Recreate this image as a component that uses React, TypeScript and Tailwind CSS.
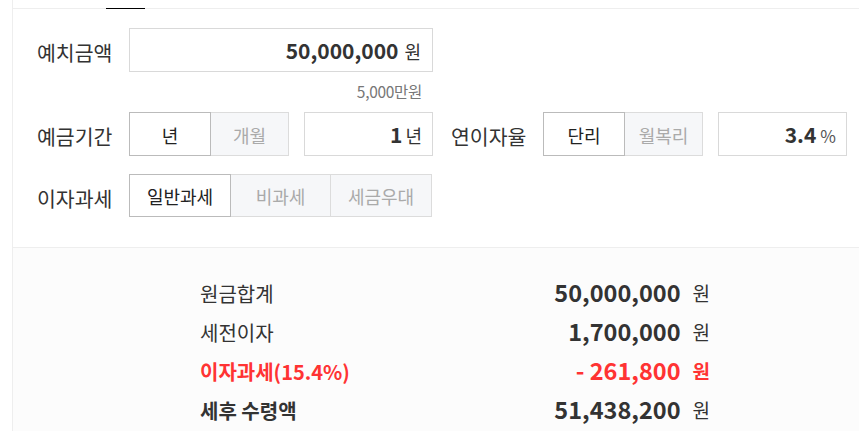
import React from 'react';

const font = { fontFamily: '"Noto Sans CJK KR", "Noto Sans", sans-serif' };

function Seg({
  items,
  widths,
  selected,
}: {
  items: string[];
  widths: string[];
  selected: number;
}) {
  return (
    <div className="flex">
      {items.map((label, i) => {
        const on = i === selected;
        return (
          <div
            key={label}
            className={`${widths[i]} h-full flex items-center justify-center pt-[2px] text-[18px] border ${
              i > 0 ? '-ml-px' : ''
            } ${
              on
                ? 'relative z-10 bg-white border-[#bbbbbb] text-[#222]'
                : 'bg-[#f6f7f9] border-[#dcdcdc] text-[#aaaaaa]'
            }`}
          >
            {label}
          </div>
        );
      })}
    </div>
  );
}

function Field({ value, unit }: { value: string; unit: React.ReactNode }) {
  return (
    <div className="w-[129px] h-full border border-[#d9d9d9] bg-white flex items-center justify-end pr-[10px] text-[#333]">
      <span className="text-[21px] font-bold leading-none">{value}</span>
      {unit}
    </div>
  );
}

const results = [
  { label: '원금합계', value: '50,000,000', red: false, bold: false },
  { label: '세전이자', value: '1,700,000', red: false, bold: false },
  { label: '이자과세(15.4%)', value: '- 261,800', red: true, bold: true },
  { label: '세후 수령액', value: '51,438,200', red: false, bold: true },
];

export default function App() {
  return (
    <div className="w-[859px] h-[431px] overflow-hidden bg-white pl-[12px]" style={font}>
      <div className="h-full border-l border-[#eeeeee] flex flex-col">
        {/* tab strip */}
        <div className="h-[8px]" />
        <div className="flex h-px">
          <div className="w-[93px] bg-[#eeeeee]" />
          <div className="w-[39px] bg-black" />
          <div className="flex-1 bg-[#eeeeee]" />
        </div>

        {/* form */}
        <div className="pl-[24px] pt-[19px] pb-[30px] text-[#333]">
          <div className="flex h-[44px] items-center">
            <div className="w-[92px] pt-[5px] text-[20.5px]">예치금액</div>
            <div className="w-[304px] h-full border border-[#d9d9d9] flex items-center justify-end pr-[11px]">
              <span className="text-[21px] font-bold leading-none">50,000,000</span>
              <span className="text-[18px] ml-[6px] pt-[2px]">원</span>
            </div>
          </div>
          <div className="w-[396px] h-[40px] flex items-center justify-end pr-[11px] text-[15.5px] text-[#777] tracking-[-0.3px]">
            5,000만원
          </div>

          <div className="flex h-[44px] items-center">
            <div className="w-[92px] pt-[5px] text-[20.5px]">예금기간</div>
            <div className="h-full flex">
              <Seg items={['년', '개월']} widths={['w-[82px]', 'w-[79px]']} selected={0} />
            </div>
            <div className="h-full ml-[15px]">
              <Field value="1" unit={<span className="text-[18px] ml-[3px] pt-[2px]">년</span>} />
            </div>
            <div className="w-[92px] ml-[18px] pt-[5px] text-[20.5px]">연이자율</div>
            <div className="h-full flex">
              <Seg items={['단리', '월복리']} widths={['w-[82px]', 'w-[79px]']} selected={0} />
            </div>
            <div className="h-full ml-[15px]">
              <Field value="3.4" unit={<span className="text-[17px] ml-[4px] pt-[3px] text-[#555]">%</span>} />
            </div>
          </div>

          <div className="flex h-[43px] items-center mt-[18px]">
            <div className="w-[92px] pt-[5px] text-[20.5px]">이자과세</div>
            <div className="h-full flex">
              <Seg
                items={['일반과세', '비과세', '세금우대']}
                widths={['w-[102px]', 'w-[101px]', 'w-[102px]']}
                selected={0}
              />
            </div>
          </div>
        </div>

        {/* result */}
        <div className="flex-1 bg-[#fcfcfc] border-t border-[#eeeeee] pt-[25px]">
          <div className="ml-[187px] w-[510px]">
            {results.map((r) => (
              <div
                key={r.label}
                className={`h-[39px] flex items-center justify-between ${
                  r.red ? 'text-[#ff3333]' : 'text-[#333]'
                }`}
              >
                <span className={`text-[20px] pt-[3px] ${r.bold ? 'font-bold' : ''}`}>{r.label}</span>
                <span className="flex items-center">
                  <span className="text-[23.5px] font-bold leading-none">{r.value}</span>
                  <span className={`text-[19px] ml-[12px] pt-[2px] ${r.red ? 'font-bold' : ''}`}>원</span>
                </span>
              </div>
            ))}
          </div>
        </div>
      </div>
    </div>
  );
}
